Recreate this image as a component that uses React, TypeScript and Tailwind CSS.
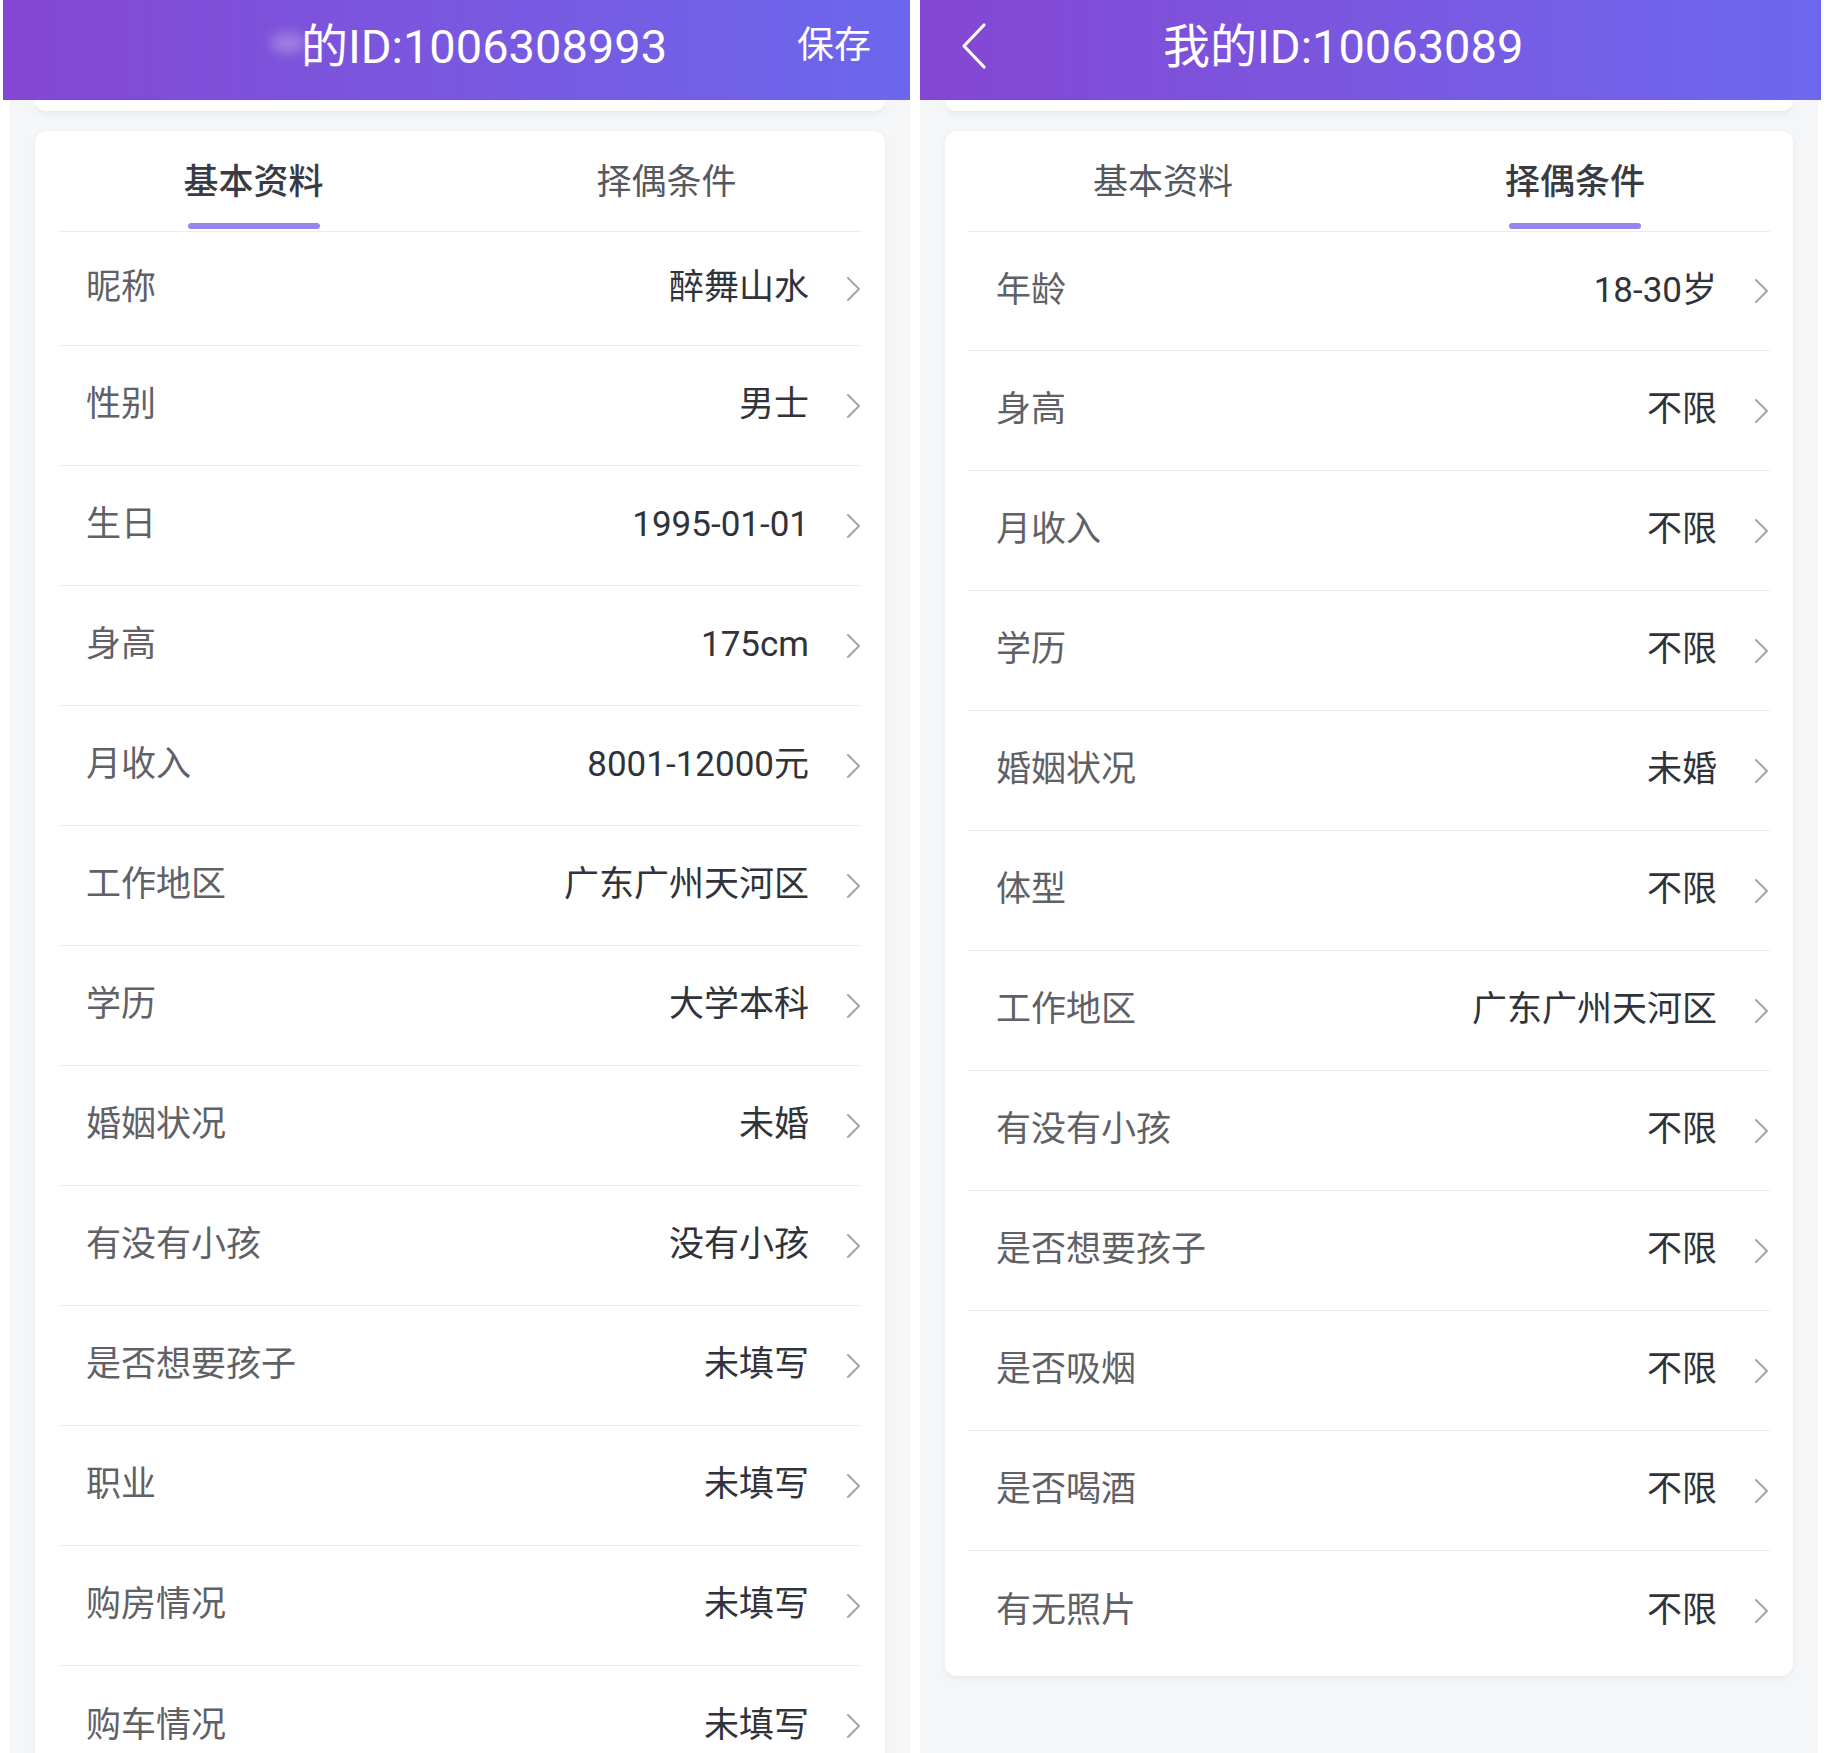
const basic = [
  ["昵称", "醉舞山水"],
  ["性别", "男士"],
  ["生日", "1995-01-01"],
  ["身高", "175cm"],
  ["月收入", "8001-12000元"],
  ["工作地区", "广东广州天河区"],
  ["学历", "大学本科"],
  ["婚姻状况", "未婚"],
  ["有没有小孩", "没有小孩"],
  ["是否想要孩子", "未填写"],
  ["职业", "未填写"],
  ["购房情况", "未填写"],
  ["购车情况", "未填写"],
];

const partner = [
  ["年龄", "18-30岁"],
  ["身高", "不限"],
  ["月收入", "不限"],
  ["学历", "不限"],
  ["婚姻状况", "未婚"],
  ["体型", "不限"],
  ["工作地区", "广东广州天河区"],
  ["有没有小孩", "不限"],
  ["是否想要孩子", "不限"],
  ["是否吸烟", "不限"],
  ["是否喝酒", "不限"],
  ["有无照片", "不限"],
];

function Chevron() {
  return (
    <svg width="15" height="26" viewBox="0 0 15 26" className="ml-[37px] shrink-0">
      <polyline points="2,2 13,13 2,24" fill="none" stroke="#a3a5aa" strokeWidth="2" strokeLinecap="round" strokeLinejoin="round" />
    </svg>
  );
}

function Row({ label, value, h, last }: { label: string; value: string; h: string; last?: boolean }) {
  return (
    <div className={`flex items-center justify-between ${last ? "" : "border-b border-[#ededef]"} ${h}`}>
      <span className="pl-[28px] text-[35px] text-[#5f6167]">{label}</span>
      <div className="flex items-center pr-[1px]">
        <span className="text-[35px] text-[#30333a]">{value}</span>
        <Chevron />
      </div>
    </div>
  );
}

function Tabs({ active }: { active: number }) {
  const tabs = ["基本资料", "择偶条件"];
  return (
    <div className="grid grid-cols-2 px-[12px] h-[100px]">
      {tabs.map((t, i) => (
        <div key={t} className="flex flex-col items-center pt-[32px]">
          <span className={`text-[35px] leading-[40px] ${i === active ? "text-[#383b43] font-medium" : "text-[#55585f]"}`}>{t}</span>
          <div className={`mt-[20px] h-[6px] w-[132px] rounded-full ${i === active ? "bg-[#9784ee]" : "bg-transparent"}`} />
        </div>
      ))}
    </div>
  );
}

function Card({ rows, active, firstH }: { rows: string[][]; active: number; firstH: string }) {
  return (
    <div className="mt-[20px] bg-white rounded-[12px] shadow-[0_2px_6px_rgba(0,0,0,0.06)] pb-[5px]">
      <Tabs active={active} />
      <div className="mx-[23px] border-t border-[#ededef]">
        {rows.map((r, i) => (
          <Row
            key={r[0] + i}
            label={r[0]}
            value={r[1]}
            h={i === 0 ? firstH : "h-[120px]"}
            last={i === rows.length - 1}
          />
        ))}
      </div>
    </div>
  );
}

function Sliver() {
  return <div className="h-[11px] bg-white rounded-b-[12px] shadow-[0_3px_6px_rgba(0,0,0,0.06)]" />;
}

export default function App() {
  return (
    <div className="w-[1829px] h-[1753px] overflow-hidden bg-white flex font-[Roboto,'Noto_Sans_CJK_SC',sans-serif]">
      {/* left screen */}
      <div className="ml-[3px] w-[907px] flex flex-col">
        <div className="h-[100px] shrink-0 pb-[8px] bg-linear-to-r from-[#8447d3] to-[#6b67ec] grid grid-cols-[1fr_auto_1fr] items-center text-white">
          <div />
          <div className="text-[47px] leading-none whitespace-nowrap pl-[8px]">
            <span className="relative text-transparent">
              我
              <span className="absolute right-[-4px] top-[14px] h-[20px] w-[34px] rounded-full bg-white/25 blur-[6px]" />
            </span>
            的ID:1006308993
          </div>
          <div className="flex justify-end pr-[39px] text-[37px]">保存</div>
        </div>
        <div className="ml-[7px] flex-1 bg-[#f5f6f8] px-[25px]">
          <Sliver />
          <Card rows={basic} active={0} firstH="h-[114px]" />
        </div>
      </div>

      {/* right screen */}
      <div className="ml-[10px] w-[901px] flex flex-col">
        <div className="h-[100px] shrink-0 pb-[8px] bg-linear-to-r from-[#8446d3] to-[#6c68ee] flex items-center text-white">
          <svg width="28" height="48" viewBox="0 0 28 48" className="ml-[40px]">
            <polyline points="24,3 4,24 24,45" fill="none" stroke="white" strokeWidth="3.2" strokeLinecap="round" strokeLinejoin="round" />
          </svg>
          <span className="ml-[175px] text-[47px] leading-none whitespace-nowrap">我的ID:10063089</span>
        </div>
        <div className="mr-[3px] flex-1 bg-[#f5f6f8] px-[25px]">
          <Sliver />
          <Card rows={partner} active={1} firstH="h-[119px]" />
        </div>
      </div>
    </div>
  );
}
